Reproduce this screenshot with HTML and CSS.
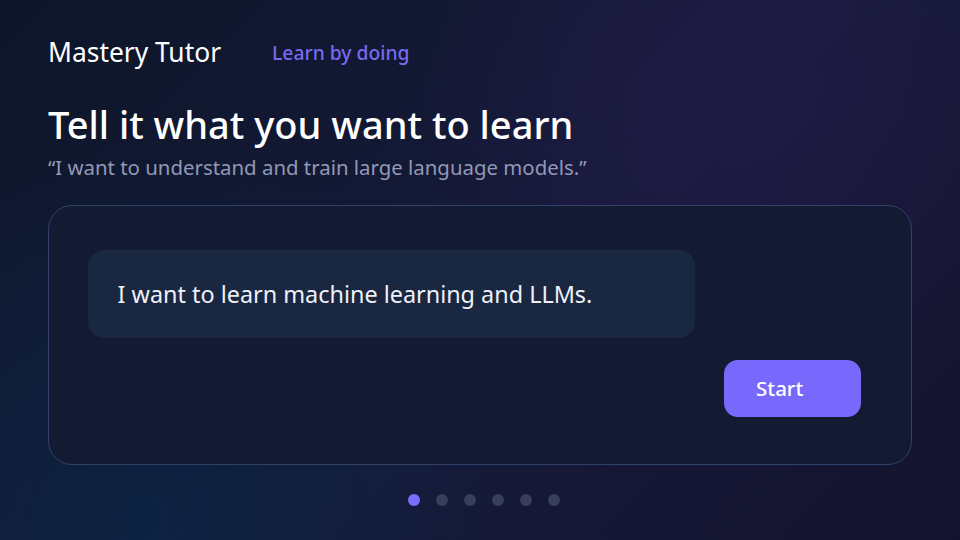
FILE: index.html
```html
<!DOCTYPE html>
<html lang="en">
<head>
<meta charset="utf-8">
<title>Mastery Tutor</title>
<link rel="stylesheet" href="styles.css">
</head>
<body>
<div class="page">
  <header class="topbar">
    <div class="brand">Mastery Tutor</div>
    <div class="tag">Learn by doing</div>
  </header>
  <section class="intro">
    <h1 class="title">Tell it what you want to learn</h1>
    <p class="subtitle">“I want to understand and train large language models.”</p>
  </section>
  <section class="card">
    <div class="bubble">I want to learn machine learning and LLMs.</div>
    <div class="actions">
      <button class="start">Start</button>
    </div>
  </section>
  <nav class="dots">
    <span class="dot active"></span>
    <span class="dot"></span>
    <span class="dot"></span>
    <span class="dot"></span>
    <span class="dot"></span>
    <span class="dot"></span>
  </nav>
</div>
</body>
</html>
```

FILE: styles.css
```css
* { box-sizing: border-box; }
html, body { margin: 0; padding: 0; }
body {
  width: 960px;
  height: 540px;
  overflow: hidden;
  font-family: "Noto Sans", "Open Sans", sans-serif;
  color: #f4f5fb;
  background:
    radial-gradient(circle at 740px 85px, rgba(40, 28, 80, 0.55) 0, rgba(40, 28, 80, 0) 320px),
    radial-gradient(circle at 140px 520px, rgba(10, 38, 70, 0.7) 0, rgba(10, 38, 70, 0) 380px),
    linear-gradient(135deg, #0d1629 0%, #161a3a 55%, #14132e 100%);
}
.page {
  padding: 36px 48px 0 48px;
  display: flex;
  flex-direction: column;
}
.topbar {
  display: flex;
  align-items: center;
  gap: 51px;
  height: 32px;
}
.brand {
  font-size: 26.4px;
  font-weight: 400;
  color: #ffffff;
}
.tag {
  font-size: 19.3px;
  font-weight: 500;
  color: #7868f2;
}
.intro { margin-top: 32px; }
.title {
  margin: 0;
  font-size: 38px;
  line-height: 48px;
  font-weight: 500;
  color: #ffffff;
}
.subtitle {
  margin: 6px 0 0 0;
  font-size: 20.4px;
  line-height: 26px;
  color: #9298b6;
}
.card {
  margin-top: 25px;
  height: 260px;
  border: 1.5px solid #30426a;
  border-radius: 24px;
  background: #121b32;
  padding: 43.5px 50px 0 38.5px;
  display: flex;
  flex-direction: column;
}
.bubble {
  width: 607px;
  height: 88px;
  border-radius: 16px;
  background: #1a2741;
  padding-left: 30px;
  display: flex;
  align-items: center;
  font-size: 23.4px;
  color: #eef0f8;
}
.actions {
  display: flex;
  justify-content: flex-end;
  margin-top: 22px;
}
.start {
  width: 137px;
  height: 57px;
  border: 0;
  border-radius: 14px;
  background: #7868fc;
  color: #ffffff;
  font-family: inherit;
  font-size: 20.5px;
  font-weight: 500;
  text-align: left;
  padding: 0 0 0 32px;
}
.dots {
  display: flex;
  justify-content: center;
  gap: 16px;
  margin-top: 29px;
  padding-left: 8px;
}
.dot {
  width: 12px;
  height: 12px;
  border-radius: 50%;
  background: #373f5c;
}
.dot.active { background: #7a6cff; }
```
